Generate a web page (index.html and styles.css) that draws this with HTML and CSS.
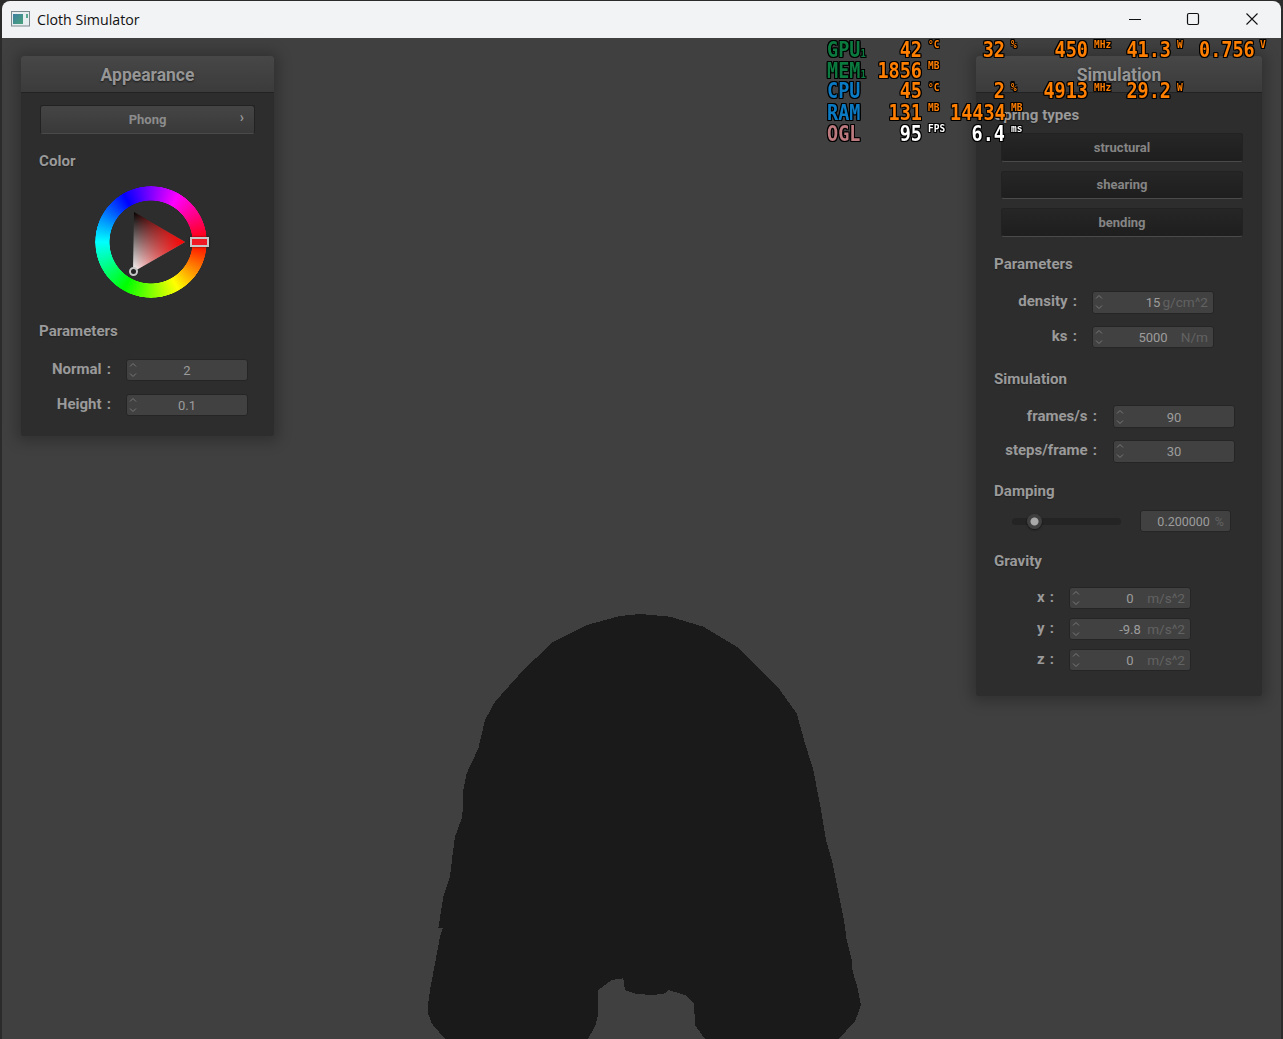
FILE: index.html
```html
<!DOCTYPE html>
<html lang="en">
<head>
<meta charset="utf-8">
<title>Cloth Simulator</title>
<link rel="stylesheet" href="styles.css">
</head>
<body>
<div class="app">
  <header class="titlebar">
    <svg class="app-icon" width="20" height="16" viewBox="0 0 20 16">
      <defs><linearGradient id="ig" x1="0" y1="0" x2="1" y2="1"><stop offset="0" stop-color="#3c7fa0"/><stop offset="1" stop-color="#4ba37c"/></linearGradient></defs>
      <rect x=".5" y=".5" width="18" height="14.5" fill="#e8eef0" stroke="#7d8a90"/>
      <rect x="2" y="3" width="10" height="10" fill="url(#ig)"/>
      <rect x="15" y="3" width="2" height="4" fill="#5aa890"/>
    </svg>
    <span class="app-title">Cloth Simulator</span>
    <div class="controls">
      <div class="control"><svg width="14" height="14" viewBox="0 0 14 14"><path d="M1 7.5H13" stroke="#111" fill="none"/></svg></div>
      <div class="control"><svg width="14" height="14" viewBox="0 0 14 14"><rect x="1.5" y="1.5" width="11" height="11" rx="1.5" stroke="#111" fill="none" stroke-width="1.2"/></svg></div>
      <div class="control"><svg width="14" height="14" viewBox="0 0 14 14"><path d="M1.5 1.5L12.5 12.5M12.5 1.5L1.5 12.5" stroke="#111" fill="none" stroke-width="1.1"/></svg></div>
    </div>
  </header>

  <main class="canvas">
    <svg class="cloth" width="450" height="439" viewBox="0 0 1350 1317" shape-rendering="crispEdges">
      <path fill="#1a1a1a" d="M24 1215L30 1170L45 1090L60 1010L68 985L55 985L62 940L70 890L90 830L97 770L105 710L127 650L130 570L140 520L175 445L195 360L225 305L310 210L400 125L500 75L600 48L660 42L750 50L850 80L950 140L1080 270L1130 340L1155 430L1180 510L1205 640L1218 720L1238 790L1252 860L1272 960L1280 1020L1295 1080L1298 1115L1312 1160L1323 1215L1305 1265L1255 1317L855 1317L825 1275L822 1210L795 1185L745 1170L735 1180L700 1185L650 1182L615 1170L610 1135L575 1140L535 1170L535 1240L525 1280L503 1317L75 1317L35 1270L24 1240Z"/>
    </svg>

    <section class="panel panel-appearance">
      <h2 class="panel-title">Appearance</h2>
      <div class="panel-body">
        <div class="popup-button"><span>Phong</span><i class="popup-arrow">›</i></div>
        <h3 class="section section-color">Color</h3>
        <div class="wheel">
          <div class="wheel-ring"></div>
          <svg class="wheel-tri" width="112" height="112" viewBox="0 0 112 112">
            <defs>
              <linearGradient id="bw" x1="0" y1="0" x2="0" y2="1"><stop offset="0" stop-color="#000"/><stop offset="1" stop-color="#fff"/></linearGradient>
              <linearGradient id="rd" x1="0" y1="0" x2="1" y2="0"><stop offset="0" stop-color="#f00" stop-opacity="0"/><stop offset="1" stop-color="#f00"/></linearGradient>
            </defs>
            <polygon points="39,26 90,56 38,86" fill="url(#bw)"/>
            <polygon points="39,26 90,56 38,86" fill="url(#rd)"/>
          </svg>
          <div class="wheel-hue"></div>
          <div class="wheel-dot"></div>
        </div>
        <h3 class="section section-params">Parameters</h3>
        <div class="form form-app">
          <label>Normal :</label>
          <div class="num"><span class="spin"><svg width="10" height="18" viewBox="0 0 10 18"><path d="M2 5.5L5 2.5L8 5.5M2 12.5L5 15.5L8 12.5" fill="none" stroke="#787878"/></svg></span><span class="val">2</span></div>
          <label>Height :</label>
          <div class="num"><span class="spin"><svg width="10" height="18" viewBox="0 0 10 18"><path d="M2 5.5L5 2.5L8 5.5M2 12.5L5 15.5L8 12.5" fill="none" stroke="#787878"/></svg></span><span class="val">0.1</span></div>
        </div>
      </div>
    </section>

    <section class="panel panel-sim">
      <h2 class="panel-title">Simulation</h2>
      <div class="panel-body">
        <h3 class="section">Spring types</h3>
        <div class="toggles">
          <div class="toggle">structural</div>
          <div class="toggle">shearing</div>
          <div class="toggle">bending</div>
        </div>
        <h3 class="section sim-params">Parameters</h3>
        <div class="form form-params">
          <label>density :</label>
          <div class="num"><span class="spin"><svg width="10" height="18" viewBox="0 0 10 18"><path d="M2 5.5L5 2.5L8 5.5M2 12.5L5 15.5L8 12.5" fill="none" stroke="#787878"/></svg></span><span class="val">15</span><span class="unit">g/cm^2</span></div>
          <label>ks :</label>
          <div class="num"><span class="spin"><svg width="10" height="18" viewBox="0 0 10 18"><path d="M2 5.5L5 2.5L8 5.5M2 12.5L5 15.5L8 12.5" fill="none" stroke="#787878"/></svg></span><span class="val">5000</span><span class="unit">N/m</span></div>
        </div>
        <h3 class="section sim-sim">Simulation</h3>
        <div class="form form-sim">
          <label>frames/s :</label>
          <div class="num"><span class="spin"><svg width="10" height="18" viewBox="0 0 10 18"><path d="M2 5.5L5 2.5L8 5.5M2 12.5L5 15.5L8 12.5" fill="none" stroke="#787878"/></svg></span><span class="val">90</span></div>
          <label>steps/frame :</label>
          <div class="num"><span class="spin"><svg width="10" height="18" viewBox="0 0 10 18"><path d="M2 5.5L5 2.5L8 5.5M2 12.5L5 15.5L8 12.5" fill="none" stroke="#787878"/></svg></span><span class="val">30</span></div>
        </div>
        <h3 class="section sim-damp">Damping</h3>
        <div class="damping">
          <div class="track"><div class="knob"></div></div>
          <div class="textbox"><span>0.200000</span><span class="unit">%</span></div>
        </div>
        <h3 class="section sim-grav">Gravity</h3>
        <div class="form form-grav">
          <label>x :</label>
          <div class="num"><span class="spin"><svg width="10" height="18" viewBox="0 0 10 18"><path d="M2 5.5L5 2.5L8 5.5M2 12.5L5 15.5L8 12.5" fill="none" stroke="#787878"/></svg></span><span class="val">0</span><span class="unit">m/s^2</span></div>
          <label>y :</label>
          <div class="num"><span class="spin"><svg width="10" height="18" viewBox="0 0 10 18"><path d="M2 5.5L5 2.5L8 5.5M2 12.5L5 15.5L8 12.5" fill="none" stroke="#787878"/></svg></span><span class="val">-9.8</span><span class="unit">m/s^2</span></div>
          <label>z :</label>
          <div class="num"><span class="spin"><svg width="10" height="18" viewBox="0 0 10 18"><path d="M2 5.5L5 2.5L8 5.5M2 12.5L5 15.5L8 12.5" fill="none" stroke="#787878"/></svg></span><span class="val">0</span><span class="unit">m/s^2</span></div>
        </div>
      </div>
    </section>

    <div class="osd">
      <b class="k gpu">GPU<small>1</small></b><b class="v">42</b><b class="u">°C</b><b class="v">32</b><b class="u">%</b><b class="v">450</b><b class="u">MHz</b><b class="v">41.3</b><b class="u">W</b><b class="v">0.756</b><b class="u">V</b>
      <b class="k gpu">MEM<small>1</small></b><b class="v">1856</b><b class="u">MB</b><b class="v"></b><b class="u"></b><b class="v"></b><b class="u"></b><b class="v"></b><b class="u"></b><b class="v"></b><b class="u"></b>
      <b class="k cpu">CPU</b><b class="v">45</b><b class="u">°C</b><b class="v">2</b><b class="u">%</b><b class="v">4913</b><b class="u">MHz</b><b class="v">29.2</b><b class="u">W</b><b class="v"></b><b class="u"></b>
      <b class="k cpu">RAM</b><b class="v">131</b><b class="u">MB</b><b class="v">14434</b><b class="u">MB</b><b class="v"></b><b class="u"></b><b class="v"></b><b class="u"></b><b class="v"></b><b class="u"></b>
      <b class="k ogl">OGL</b><b class="v w">95</b><b class="u w">FPS</b><b class="v w">6.4</b><b class="u w">ms</b><b class="v"></b><b class="u"></b><b class="v"></b><b class="u"></b><b class="v"></b><b class="u"></b>
    </div>
  </main>
</div>
</body>
</html>
```
FILE: styles.css
```css
* { box-sizing: border-box; }
html, body { margin: 0; height: 100%; }
body { background: #2b2b2b; overflow: hidden; font-family: Roboto, "Liberation Sans", sans-serif; }
.app { width: 1283px; height: 1039px; padding: 1px 2px 0; display: flex; flex-direction: column; }

.titlebar { height: 37px; flex: none; display: flex; align-items: center; background: #f2f3f5; border-radius: 8px 8px 0 0; padding-left: 9px; padding-bottom: 1px; }
.app-icon { flex: none; margin-right: 6px; }
.app-title { font: 14.2px "Open Sans", "Noto Sans", sans-serif; color: #111; }
.controls { margin-left: auto; display: flex; }
.control { width: 58.5px; height: 36px; display: flex; align-items: center; justify-content: center; }

.canvas { flex: 1; position: relative; background: #404040; overflow: hidden; }
.cloth { position: absolute; left: 418px; top: 562px; }

.panel { position: absolute; top: 18px; background: #2d2d2d; border-radius: 3px; box-shadow: 0 1px 14px 5px rgba(0,0,0,.24); }
.panel-appearance { left: 19px; width: 253px; height: 380px; }
.panel-sim { left: 974px; width: 286px; height: 640px; }
.panel-title { margin: 0; height: 37px; padding-top: 1px; display: flex; align-items: center; justify-content: center; font-size: 17.5px; font-weight: 700; color: #969696; background: linear-gradient(#474747, #3b3b3b); border-bottom: 1px solid #222; border-radius: 3px 3px 0 0; text-shadow: 0 1px 2px rgba(0,0,0,.6); }
.panel-body { padding: 12px 18px 0; display: flex; flex-direction: column; align-items: flex-start; }

.section { margin: 0; height: 20px; line-height: 20px; font-size: 15.1px; font-weight: 700; color: #9a9a9a; text-shadow: 0 1px 1px rgba(0,0,0,.3); white-space: nowrap; }
.section-color { margin-top: 17px; }
.section-params { margin-top: 23px; }
.sim-params { margin-top: 17.5px; }
.sim-sim { margin-top: 21px; }
.sim-damp { margin-top: 18.5px; }
.sim-grav { margin-top: 19px; }

.popup-button { margin-left: 1px; width: 215px; height: 29px; display: flex; align-items: center; justify-content: center; position: relative; font-size: 13px; font-weight: 700; color: #8c8c8c; background: linear-gradient(#454545, #393939); border: 1px solid #222; border-bottom-color: #4a4a4a; border-radius: 3px; }
.popup-arrow { position: absolute; right: 10px; top: 3px; font-style: normal; font-size: 14px; font-weight: 700; color: #999; }

.wheel { position: relative; width: 112px; height: 112px; margin: 15px 0 0 56px; }
.wheel-ring { position: absolute; inset: 0; border-radius: 50%; background: conic-gradient(from 90deg, #f00, #ff0, #0f0, #0ff, #00f, #f0f, #f00); mask: radial-gradient(circle closest-side, transparent 73.5%, #000 74.5%, #000 99.5%, transparent 100%); }
.wheel-tri { position: absolute; left: 0; top: 0; }
.wheel-hue { position: absolute; left: 95px; top: 51px; width: 19px; height: 10px; background: #f01822; border: 2px solid #c8c8c8; box-shadow: 0 0 2px rgba(0,0,0,.6); }
.wheel-dot { position: absolute; left: 34px; top: 81px; width: 9px; height: 9px; border-radius: 50%; border: 2px solid #c8c8c8; background: #222; }

.form { margin-top: 18px; display: grid; column-gap: 15px; align-items: center; justify-items: end; }
.form label { font-size: 15px; font-weight: 700; word-spacing: 1.5px; color: #9a9a9a; white-space: nowrap; padding-bottom: 2px; }
.form-app { grid-template-columns: 72px 122px; row-gap: 13px; }
.form-params { margin-top: 17px; grid-template-columns: 83px 122px; row-gap: 12px; }
.form-sim { margin-top: 16px; grid-template-columns: 103px 122px; column-gap: 16px; row-gap: 11.5px; }
.form-grav { margin-top: 16px; grid-template-columns: 60px 122px; row-gap: 9px; }
.form-params .num { height: 22.5px; }
.form-sim .num { height: 23px; }

.num { width: 122px; height: 22px; display: grid; grid-template-columns: minmax(0,1fr) auto minmax(0,1fr); align-items: center; padding: 0 6px; background: #414141; border: 1px solid #252525; border-radius: 3px; font-size: 13px; color: #9c9c9c; }
.spin { display: flex; align-items: center; margin-left: -5px; }
.val { text-align: center; margin-top: 1px; }
.unit { justify-self: end; color: #626262; white-space: nowrap; font-size: 13.6px; margin-right: -1px; }

.toggles { margin: 8px 0 0 7px; display: flex; flex-direction: column; gap: 9px; }
.toggle { width: 242px; height: 28.5px; display: flex; align-items: center; justify-content: center; font-size: 13px; font-weight: 700; color: #858585; background: linear-gradient(#262626, #1e1e1e); border: 1px solid #222; border-bottom-color: #4a4a4a; border-radius: 3px; }

.damping { margin: 9px 0 0 18px; display: flex; align-items: center; }
.track { position: relative; width: 109px; height: 7px; background: #242424; border-radius: 4px; }
.knob { position: absolute; left: 15px; top: -4px; width: 15px; height: 15px; border-radius: 50%; background: radial-gradient(circle, #a8a8a8 0 3.5px, #3f3f3f 4.5px); box-shadow: 0 1px 2px rgba(0,0,0,.6); }
.textbox { margin-left: 19px; width: 91px; height: 22px; display: flex; align-items: center; justify-content: flex-end; gap: 5px; padding: 1px 6px 0; background: #414141; border: 1px solid #252525; border-radius: 3px; font-size: 12.5px; color: #9c9c9c; }
.textbox .unit { font-size: 12.5px; margin-right: 0; }

.osd { position: absolute; left: 825px; top: 1px; display: grid; grid-template-columns: 40px repeat(5, 55px 28px); grid-auto-rows: 18.75px; align-items: center; font-family: "DejaVu Sans Mono", monospace; font-size: 18.5px; z-index: 5; --o: #000; transform: scaleY(1.12); transform-origin: top left; }
.osd b { white-space: nowrap; text-shadow: 1px 0 var(--o), -1px 0 var(--o), 0 1px var(--o), 0 -1px var(--o), 1px 1px var(--o), -1px -1px var(--o), 1px -1px var(--o), -1px 1px var(--o); }
.k { font-weight: 700; }
.k small { font-size: 9px; }
.gpu { color: #0b7a3e; }
.cpu { color: #0b7ac4; }
.ogl { color: #bd7a7e; }
.v { text-align: right; color: #ff7f00; }
.u { font-size: 9.5px; line-height: 10px; color: #ff7f00; padding-left: 6px; align-self: start; }
.osd .w { color: #fff; }
```
